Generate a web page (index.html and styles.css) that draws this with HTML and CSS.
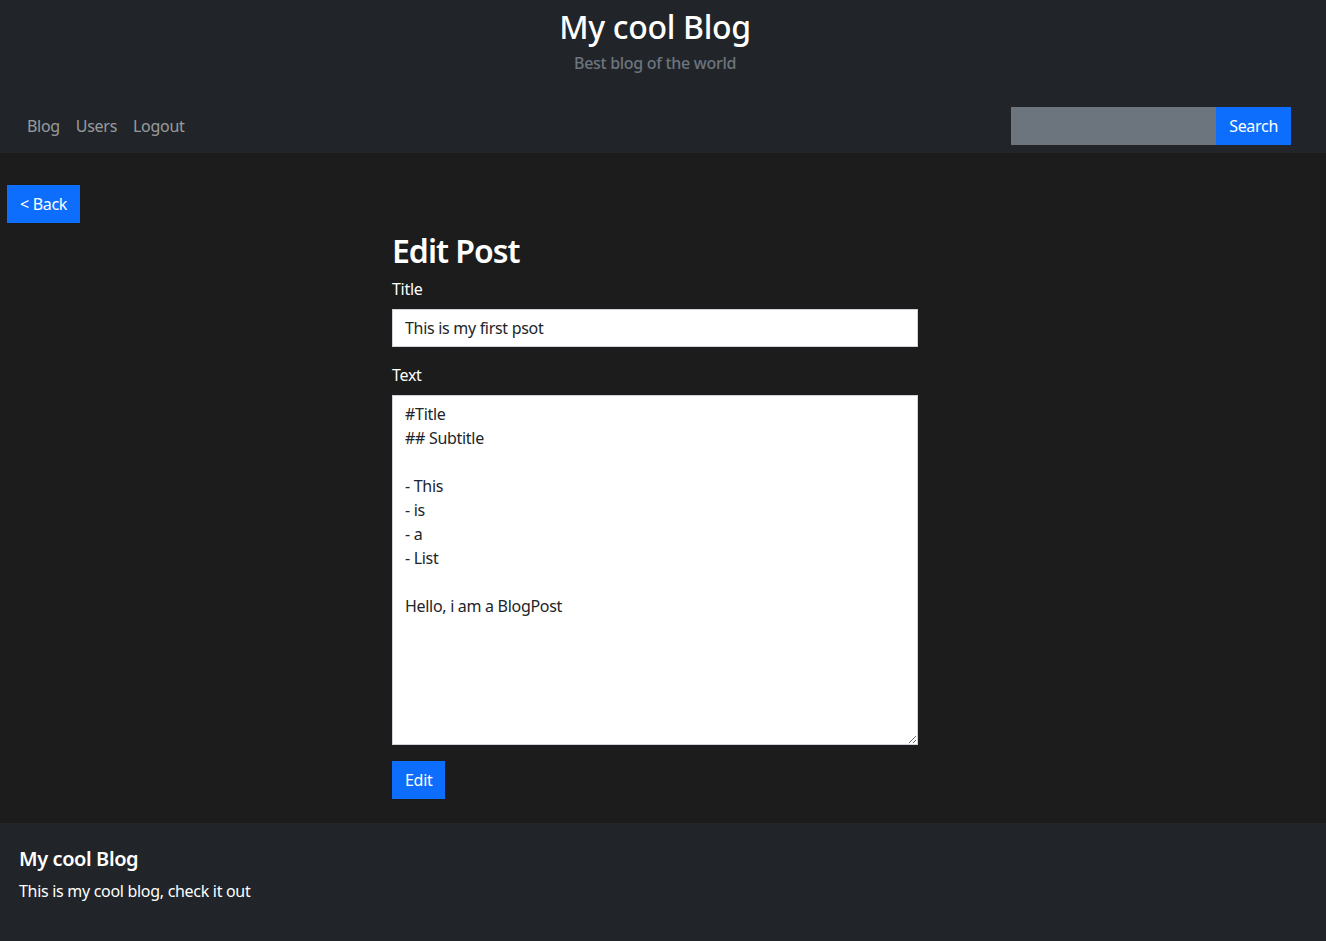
FILE: index.html
```html
<!DOCTYPE html>
<html lang="en">
<head>
<meta charset="utf-8">
<title>My cool Blog</title>
<link rel="stylesheet" href="styles.css">
</head>
<body>
<header class="site-header">
  <div class="brand">
    <h1 class="brand-title">My cool Blog</h1>
    <p class="brand-sub">Best blog of the world</p>
  </div>
  <nav class="navbar">
    <ul class="nav-links">
      <li><a href="#">Blog</a></li>
      <li><a href="#">Users</a></li>
      <li><a href="#">Logout</a></li>
    </ul>
    <form class="search">
      <input class="search-input" type="text" aria-label="Search">
      <button class="btn" type="button">Search</button>
    </form>
  </nav>
</header>
<main class="main">
  <div class="back-row"><a class="btn" href="#">&lt; Back</a></div>
  <section class="editor">
    <h2 class="editor-title">Edit Post</h2>
    <div class="field">
      <label class="label" for="title">Title</label>
      <input class="control" id="title" type="text" value="This is my first psot">
    </div>
    <div class="field">
      <label class="label" for="text">Text</label>
      <textarea class="control area" id="text">#Title
## Subtitle

- This
- is
- a
- List

Hello, i am a BlogPost</textarea>
    </div>
    <button class="btn" type="button">Edit</button>
  </section>
</main>
<footer class="site-footer">
  <h5 class="footer-title">My cool Blog</h5>
  <p class="footer-text">This is my cool blog, check it out</p>
</footer>
</body>
</html>
```

FILE: styles.css
```css
* { box-sizing: border-box; }
html, body { margin: 0; padding: 0; }
body {
  font-family: "Noto Sans", "Open Sans", sans-serif;
  font-size: 16px;
  line-height: 24px;
  letter-spacing: -0.3px;
  color: #fff;
  background: #1c1c1c;
}
.site-header {
  background: #212529;
}
.brand {
  text-align: center;
  padding-top: 6px;
  padding-right: 16px;
  height: 98px;
}
.brand-title {
  margin: 0;
  font-size: 32px;
  line-height: 42px;
  font-weight: 500;
  letter-spacing: -0.3px;
  color: #fff;
}
.brand-sub {
  margin: 3px 0 0;
  color: #6c757d;
  font-weight: 500;
}
.navbar {
  display: flex;
  align-items: center;
  justify-content: space-between;
  height: 55px;
  padding: 0 35px 0 19px;
}
.nav-links {
  list-style: none;
  display: flex;
  margin: 0;
  padding: 0;
}
.nav-links a {
  display: block;
  padding: 8px;
  color: rgba(255,255,255,.55);
  text-decoration: none;
}
.search { display: flex; margin: 0; }
.search-input {
  width: 205px;
  height: 38px;
  border: 0;
  background: #6c757d;
  margin: 0;
}
.btn {
  display: inline-block;
  font: inherit;
  letter-spacing: -0.3px;
  line-height: 24px;
  padding: 7px 13px;
  border: 0;
  background: #0d6efd;
  color: #fff;
  text-decoration: none;
  cursor: pointer;
}
.main {
  padding: 32px 0 24px;
}
.back-row {
  padding-left: 7px;
  margin-bottom: 9px;
}
.editor {
  width: 526px;
  margin-left: 392px;
}
.editor-title {
  margin: 0 0 8px;
  font-size: 32px;
  line-height: 37px;
  font-weight: 600;
  letter-spacing: -1px;
}
.field { margin-bottom: 16px; }
.label {
  display: block;
  margin-bottom: 8px;
}
.control {
  display: block;
  width: 100%;
  height: 38px;
  padding: 6px 12px;
  font: inherit;
  letter-spacing: -0.3px;
  line-height: 24px;
  color: #212529;
  background: #fff;
  border: 1px solid #ced4da;
  border-radius: 0;
}
.area {
  height: 350px;
  resize: vertical;
}
.site-footer {
  background: #212529;
  padding: 24px 19px 22px;
}
.footer-title {
  margin: 0 0 8px;
  font-size: 20px;
  line-height: 24px;
  font-weight: 600;
  letter-spacing: -0.4px;
}
.footer-text { margin: 0 0 16px; }
```
